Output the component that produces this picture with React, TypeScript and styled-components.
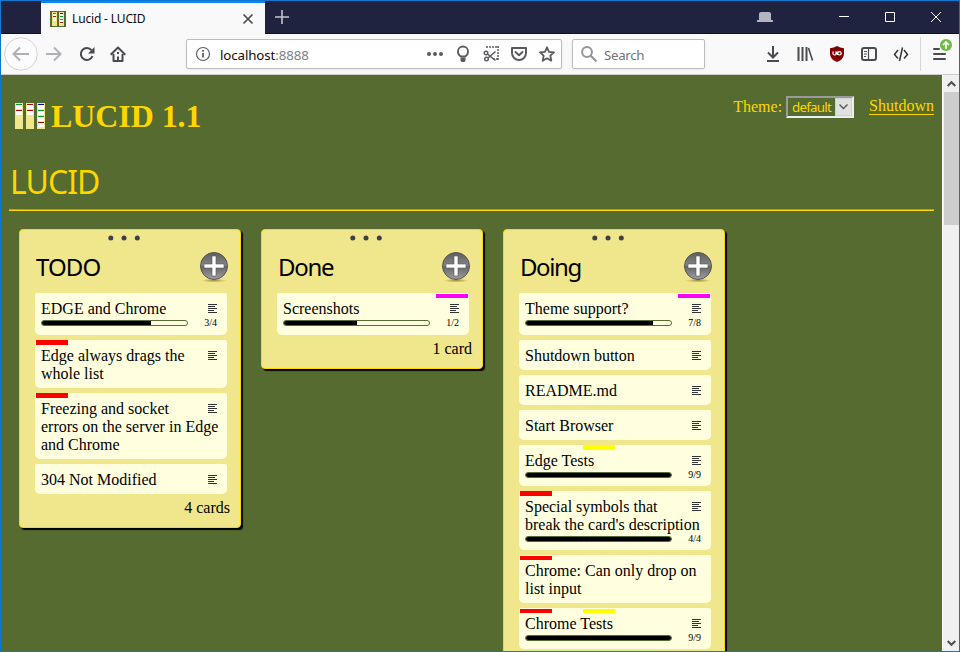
import React from 'react';
import styled, { createGlobalStyle } from 'styled-components';

const GlobalStyle = createGlobalStyle`
  * { box-sizing: border-box; }
  body { margin: 0; overflow: hidden; }
  svg { display: block; flex: none; overflow: visible; }
`;

const sans = `'Noto Sans', 'Open Sans', sans-serif`;
const serif = `'Liberation Serif', 'Times New Roman', serif`;

const Window = styled.div`
  width: 960px;
  height: 652px;
  display: flex;
  flex-direction: column;
  border: 1px solid #0a78d0;
  background: #f9f9fa;
  overflow: hidden;
`;

const TitleBar = styled.header`
  display: flex;
  height: 33px;
  flex: none;
  background: #202340;
  border-bottom: 1px solid #160d26;
`;

const Tab = styled.div`
  display: flex;
  align-items: center;
  width: 224px;
  height: 33px;
  margin-left: 40px;
  padding: 0 12px 0 9px;
  gap: 6px;
  background: #f9f9fa;
  border-top: 2px solid #0a84ff;
`;

const TabTitle = styled.span`
  flex: 1;
  font: 12px/16px ${sans};
  letter-spacing: -0.16px;
  color: #0c0c0d;
`;

const NewTab = styled.div`
  padding: 9px 0 0 10px;
  flex: 1;
`;

const WindowButton = styled.div<{ $w: number }>`
  width: ${p => p.$w}px;
  display: flex;
  align-items: center;
  justify-content: center;
`;

const HatButton = styled(WindowButton)`
  padding-right: 4px;
`;

const Toolbar = styled.nav`
  display: flex;
  align-items: center;
  height: 41px;
  flex: none;
  padding: 0 0 0 4px;
  border-bottom: 1px solid #ccc;
  background: #f9f9fa;
`;

const ToolButton = styled.div<{ $w?: number }>`
  width: ${p => p.$w ?? 32}px;
  height: 32px;
  flex: none;
  display: flex;
  align-items: center;
  justify-content: center;
`;

const Field = styled.div<{ $w: number }>`
  display: flex;
  align-items: center;
  width: ${p => p.$w}px;
  height: 30px;
  padding: 0 6px 0 8px;
  flex: none;
  gap: 12px;
  border: 1px solid #bdbdbf;
  border-radius: 2px;
  background: #fff;
  box-shadow: 0 1px 3px rgba(0, 0, 0, 0.06);
`;

const Address = styled.span`
  flex: 1;
  font: 13.3px/18px ${sans};
  letter-spacing: -0.1px;
  margin-left: -3px;
  padding-top: 2px;
  color: #0c0c0d;
  span { color: #808085; }
`;

const SearchHint = styled.span`
  font: 13.3px/18px ${sans};
  letter-spacing: -0.3px;
  margin-left: -5px;
  padding-top: 2px;
  color: #737378;
`;

const Separator = styled.div`
  width: 1px;
  height: 34px;
  margin: 0 3px;
  background: #d7d7db;
`;

const Viewport = styled.div`
  display: flex;
  flex: 1;
  min-height: 0;
`;

const Page = styled.main`
  width: 941px;
  flex: none;
  overflow: hidden;
  padding: 0 8px;
  background: #556b2f;
  color: #ffd700;
  font: 16px/18px ${serif};
`;

const Scrollbar = styled.div`
  width: 17px;
  flex: none;
  display: flex;
  flex-direction: column;
  align-items: center;
  background: #f0f0f0;
  border-left: 1px solid #fff;
`;

const ScrollArrow = styled.div`
  height: 17px;
  width: 100%;
  display: flex;
  align-items: center;
  justify-content: center;
`;

const Thumb = styled.div`
  width: 15px;
  height: 133px;
  background: #cdcdcd;
  margin-bottom: auto;
`;

const PageHead = styled.div`
  display: flex;
  height: 84px;
`;

const Brand = styled.h1`
  display: flex;
  flex: 1;
  gap: 6px;
  margin: 0;
  padding: 23px 0 0 6px;
  font: bold 32px/36px ${serif};
  letter-spacing: -0.08px;
  svg { margin-top: 5px; }
`;

const Controls = styled.div`
  display: flex;
  align-items: flex-start;
  padding-top: 21px;
`;

const Label = styled.span`
  padding-top: 2px;
  margin-right: 4px;
`;

const Select = styled.div`
  display: flex;
  width: 68px;
  height: 22px;
  margin-right: 15px;
  border: 2px solid;
  border-color: #9a9a9a #eee #eee #9a9a9a;
  font: 13.3px/18px ${sans};
  letter-spacing: -0.75px;
  span { flex: 1; padding-left: 4px; }
`;

const SelectArrow = styled.div`
  width: 17px;
  height: 18px;
  display: flex;
  align-items: center;
  justify-content: center;
  background: #e1e1e1;
  border: 1px solid #d0d0d0;
`;

const Shutdown = styled.a`
  margin-top: 1px;
  height: 18px;
  line-height: 18px;
  border-bottom: 1px solid #ffd700;
`;

const BoardTitle = styled.h2`
  margin: 0;
  height: 52px;
  padding: 5px 0 0 1px;
  border-bottom: 1px solid #ffd700;
  box-shadow: inset 0 -1px #b89f18;
  font: 32px/36px ${sans};
  letter-spacing: -0.95px;
`;

const Board = styled.div`
  display: flex;
  align-items: flex-start;
  gap: 20px;
  padding: 18px 10px;
`;

const List = styled.section`
  width: 222px;
  flex: none;
  padding: 0 13px 0 15px;
  border: 1px solid #ffd700;
  border-radius: 4px;
  background: #f0e68c;
  box-shadow: 2px 2px 1px #000;
  color: #000;
`;

const Grip = styled.div`
  display: flex;
  justify-content: center;
  height: 17px;
  padding: 5px 15px 0 0;
`;

const ListHead = styled.div`
  display: flex;
  justify-content: space-between;
  height: 46px;
  margin-right: -1px;
  padding: 5px 0 0 1px;
`;

const ListTitle = styled.h3<{ $ls: number }>`
  margin: 0;
  font: 24px/30px ${sans};
  letter-spacing: ${p => p.$ls}px;
`;

const CardBox = styled.article<{ $h: number }>`
  position: relative;
  width: 192px;
  height: ${p => p.$h}px;
  margin-bottom: 5px;
  padding: 7px 6px 0;
  border-radius: 2px 2px 5px 5px;
  background: #ffffe0;
`;

const NoteIcon = styled.div`
  float: right;
  width: 40px;
  height: 18px;
  margin-right: -9px;
  padding: 4px 0 0 18px;
`;

const Meter = styled.div`
  display: flex;
  align-items: center;
  justify-content: space-between;
  clear: both;
  height: 8px;
  margin-top: 1px;
  padding-right: 4px;
  font-size: 10px;
  line-height: 10px;
`;

const Track = styled.div`
  width: 147px;
  height: 6px;
  border: 1px solid #556b2f;
  border-radius: 3px;
  background: #ffffe0;
  overflow: hidden;
`;

const Fill = styled.div`
  height: 100%;
  background: #000;
`;

const Tag = styled.i<{ $x: number; $c: string; $thin?: boolean }>`
  position: absolute;
  left: ${p => p.$x}px;
  top: ${p => (p.$thin ? 1 : 0)}px;
  width: 32px;
  height: ${p => (p.$thin ? 4 : 5)}px;
  background: ${p => p.$c};
`;

const Footer = styled.div`
  height: 28px;
  text-align: right;
  margin-right: -3px;
`;

const Ico = ({ children, size = 16, c = '#4a4a4f' }: { children: React.ReactNode; size?: number; c?: string }) => (
  <svg width={size} height={size} viewBox={`0 0 ${size} ${size}`} fill="none" stroke={c} strokeWidth="2">{children}</svg>
);

const Favicon = () => (
  <svg width="16" height="16" shapeRendering="crispEdges">
    <rect width="16" height="16" fill="#556b2f" />
    <rect x="2" y="1" width="5" height="14" fill="#f0e68c" />
    <rect x="9" y="1" width="5" height="14" fill="#f0e68c" />
    <path d="M3 2h3v8H3zM10 2h3v11h-3z" fill="#fff" />
    <path d="M3 2h3v1H3zM10 5h3v1h-3zM10 8h3v1h-3z" fill="#00a020" />
    <path d="M3 5h3v1H3zM10 11h3v1h-3z" fill="#b01010" />
    <path d="M10 2h3v1h-3z" fill="#1010b0" />
  </svg>
);

const Logo = () => (
  <svg width="30" height="26" shapeRendering="crispEdges">
    {[0, 11, 22].map(x => <rect key={x} x={x} width="8" height="26" rx="1" fill="#f0e68c" />)}
    <path d="M1 1h6v11H1zM12 1h6v11h-6zM23 1h6v23h-6z" fill="#fff" />
    <path d="M1 6h6v1H1zM12 6h6v1h-6zM23 6h6v1h-6zM23 12h6v1h-6zM23 18h6v1h-6z" fill="#f0e68c" />
    <path d="M1 1h6v1H1zM23 7h6v1h-6zM23 13h6v1h-6z" fill="#00a020" />
    <path d="M12 1h6v1h-6zM1 7h6v1H1zM12 7h6v1h-6zM23 19h6v1h-6z" fill="#b00000" />
    <path d="M23 1h6v1h-6z" fill="#0000b0" />
  </svg>
);

const PlusBadge = () => (
  <svg width="28" height="31" viewBox="0 0 28 31">
    <defs>
      <linearGradient id="disc" x1="0" y1="0" x2="0" y2="1">
        <stop offset="0" stopColor="#5f5f5f" />
        <stop offset=".48" stopColor="#858585" />
        <stop offset=".52" stopColor="#666" />
        <stop offset="1" stopColor="#a0a0a0" />
      </linearGradient>
      <radialGradient id="shade">
        <stop offset="0" stopColor="#8c7b28" stopOpacity=".8" />
        <stop offset="1" stopColor="#8c7b28" stopOpacity="0" />
      </radialGradient>
    </defs>
    <ellipse cx="14" cy="28.6" rx="13" ry="1.8" fill="url(#shade)" />
    <circle cx="14" cy="14" r="13.5" fill="url(#disc)" stroke="#555" strokeWidth="1" />
    <path d="M12 4h4v8h8v4h-8v8h-4v-8H4v-4h8z" fill="#fff" stroke="#555" strokeWidth=".6" />
  </svg>
);

type CardData = { text: string; h: number; done?: number; total?: number; plain?: boolean; tags?: [number, string, boolean?][] };
type ListData = { title: string; ls: number; cards: CardData[]; count?: string };

const lists: ListData[] = [
  { title: 'TODO', ls: -0.9, count: '4 cards', cards: [
    { text: 'EDGE and Chrome', h: 42, done: 3, total: 4 },
    { text: 'Edge always drags the whole list', h: 48, tags: [[1, '#f00']] },
    { text: 'Freezing and socket errors on the server in Edge and Chrome', h: 66, tags: [[1, '#f00']] },
    { text: '304 Not Modified', h: 30 },
  ] },
  { title: 'Done', ls: -1.3, count: '1 card', cards: [
    { text: 'Screenshots', h: 42, done: 1, total: 2, tags: [[159, '#f0f', true]] },
  ] },
  { title: 'Doing', ls: -1.4, cards: [
    { text: 'Theme support?', h: 42, done: 7, total: 8, tags: [[159, '#f0f', true]] },
    { text: 'Shutdown button', h: 30 },
    { text: 'README.md', h: 30 },
    { text: 'Start Browser', h: 30 },
    { text: 'Edge Tests', h: 41, done: 9, total: 9, tags: [[64, '#ff0']] },
    { text: "Special symbols that break the card's description", h: 59, done: 4, total: 4, tags: [[1, '#f00']] },
    { text: 'Chrome: Can only drop on list input', h: 48, plain: true, tags: [[1, '#f00', true]] },
    { text: 'Chrome Tests', h: 41, done: 9, total: 9, tags: [[1, '#f00', true], [64, '#ff0', true]] },
  ] },
];

const Card = ({ card }: { card: CardData }) => (
  <CardBox $h={card.h}>
    {card.tags?.map(([x, c, thin]) => <Tag key={x} $x={x} $c={c} $thin={thin} />)}
    {!card.plain && (
      <NoteIcon>
        <svg width="9" height="10" shapeRendering="crispEdges"><path d="M0 .5h9M0 2.5h7M0 4.5h9M0 6.5h6M0 8.5h9" stroke="#333" /></svg>
      </NoteIcon>
    )}
    {card.text}
    {card.total && (
      <Meter>
        <Track><Fill style={{ width: `${(card.done! / card.total) * 100}%` }} /></Track>
        {card.done}/{card.total}
      </Meter>
    )}
  </CardBox>
);

export default function App() {
  return (
    <Window>
      <GlobalStyle />
      <TitleBar>
        <Tab>
          <Favicon />
          <TabTitle>Lucid - LUCID</TabTitle>
          <Ico size={10}><path d="M.5.5l9 9M9.5.5l-9 9" strokeWidth="1.7" /></Ico>
        </Tab>
        <NewTab><Ico size={14} c="#c4c4cc"><path d="M7 0v14M0 7h14" strokeWidth="1.6" /></Ico></NewTab>
        <HatButton $w={108}>
          <svg width="16" height="10"><path d="M2 8V1.500Q2.200 0 4 0h8q1.800 0 2 1.500V8H16v2H0V8z" fill="#b4b4c0" /></svg>
        </HatButton>
        <WindowButton $w={46}><Ico size={10} c="#fff"><path d="M0 4.500h10" strokeWidth="1" /></Ico></WindowButton>
        <WindowButton $w={46}><Ico size={10} c="#fff"><path d="M.5.5h9v9h-9z" strokeWidth="1" /></Ico></WindowButton>
        <WindowButton $w={46}><Ico size={10} c="#fff"><path d="M0 0l10 10M10 0L0 10" strokeWidth="1" /></Ico></WindowButton>
      </TitleBar>
      <Toolbar>
        <ToolButton>
          <Ico size={34} c="#b1b1b5"><circle cx="17" cy="17" r="16.300" stroke="#d4d4d8" strokeWidth="1" fill="#fcfcfc" /><path d="M25 17H10M16 10.500L9.500 17l6.500 6.500" /></Ico>
        </ToolButton>
        <ToolButton $w={34}><Ico c="#b1b1b5"><path d="M0 8h14M8 1.500L14.500 8 8 14.500" /></Ico></ToolButton>
        <ToolButton $w={31}><Ico><path d="M13.500 10A6 6 0 1 1 12.500 4.200" /><path d="M15.500 1v6.500H9z" fill="#4a4a4f" stroke="none" /></Ico></ToolButton>
        <ToolButton><Ico><path d="M.7 8.700L8 1.500l7.300 7.200M3.500 8v7h9V8" strokeLinejoin="round" /><path d="M7 10.500h2V15H7zM7 6h2v2H7z" fill="#4a4a4f" stroke="none" /></Ico></ToolButton>
        <ToolButton $w={52} />
        <Field $w={376}>
          <Ico c="#5e5e63"><circle cx="8" cy="8" r="6.500" strokeWidth="1.200" /><path d="M8 7v4.500M8 4v1.700" strokeWidth="1.800" /></Ico>
          <Address>localhost<span>:8888</span></Address>
          <Ico><g fill="#5a5a5f" stroke="none"><circle cx="2" cy="8" r="2" /><circle cx="8" cy="8" r="2" /><circle cx="14" cy="8" r="2" /></g></Ico>
          <Ico c="#5a5a5f"><path d="M5.800 10.500Q2.800 8.500 3 5.500A5 5 0 0 1 13 5.500Q13.200 8.500 10.200 10.500z" strokeWidth="1.800" /><path d="M5.500 11.500h5v3l-1 1.500h-3l-1-1.500z" fill="#5a5a5f" stroke="none" /></Ico>
          <Ico c="#5a5a5f"><path d="M3 1h13M15 0v14M10 13h6" strokeWidth="1.500" strokeDasharray="2 1" /><circle cx="3" cy="7" r="1.800" strokeWidth="1.400" /><circle cx="3.500" cy="13" r="1.800" strokeWidth="1.400" /><path d="M4.500 8l8 6.500M5 12l7.500-6.500" strokeWidth="1.600" /></Ico>
          <Ico c="#5a5a5f"><path d="M1 2h14v5a7 7 0 0 1-14 0zM4.500 6L8 9.300 11.500 6" strokeWidth="2" strokeLinejoin="round" strokeLinecap="round" /></Ico>
          <Ico c="#5a5a5f"><path d="M8 1.300l2 4.500 5 .5-3.700 3.400 1 5L8 12.300l-4.300 2.400 1-5L1 6.300l5-.5z" strokeLinejoin="round" strokeWidth="1.800" /></Ico>
        </Field>
        <ToolButton $w={10} />
        <Field $w={133}>
          <Ico c="#949499"><circle cx="6" cy="6" r="4.900" /><path d="M9.500 9.500L15.500 15.500" strokeWidth="2.300" /></Ico>
          <SearchHint>Search</SearchHint>
        </Field>
        <ToolButton $w={52} />
        <ToolButton><Ico><path d="M8 0v11M3 6.500l5 5 5-5M2 15h12" /></Ico></ToolButton>
        <ToolButton><Ico><path d="M1.500 1v14M5.500 1v14M9.500 1v14" /><path d="M11.500 2L15.500 14.500" strokeWidth="1.600" /></Ico></ToolButton>
        <ToolButton>
          <svg width="16" height="16" viewBox="0 0 16 16"><path d="M8 0q3 2 7 2.200V8q0 5-7 8Q1 13 1 8V2.200Q5 2 8 0z" fill="#800000" /><path d="M4 5.500v2a1.500 1.500 0 0 0 3 0v-2M8.200 9V5.500" fill="none" stroke="#fff" strokeWidth="1.200" /><circle cx="10.500" cy="7.300" r="1.700" fill="none" stroke="#fff" strokeWidth="1.200" /></svg>
        </ToolButton>
        <ToolButton><Ico><rect x="1" y="2" width="14" height="12" rx="2" /><path d="M7.500 2v12M3 5.500h3M3 8h3M3 10.500h2" strokeWidth="1.200" /></Ico></ToolButton>
        <ToolButton><Ico c="#333"><path d="M5 4L1.500 8.500 5 12.500M11 4l3.500 4.500L11 12.500M9.500 1.500l-3 13.500" strokeWidth="1.500" /></Ico></ToolButton>
        <Separator />
        <ToolButton $w={34}>
          <Ico><path d="M1 3h5M1 8h11M1 13h11" strokeLinecap="round" /><circle cx="13" cy="-1" r="6" fill="#6abf40" stroke="none" /><path d="M13 3V-3.500M10 -1l3-3 3 3" stroke="#fff" strokeWidth="1.700" /></Ico>
        </ToolButton>
      </Toolbar>
      <Viewport>
        <Page>
          <PageHead>
            <Brand><Logo />LUCID 1.1</Brand>
            <Controls>
              <Label>Theme:</Label>
              <Select>
                <span>default</span>
                <SelectArrow><svg width="9" height="6"><path d="M.5.5l4 4 4-4" fill="none" stroke="#555" strokeWidth="1.400" /></svg></SelectArrow>
              </Select>
              <Shutdown>Shutdown</Shutdown>
            </Controls>
          </PageHead>
          <BoardTitle>LUCID</BoardTitle>
          <Board>
            {lists.map(list => (
              <List key={list.title}>
                <Grip>
                  <svg width="32" height="6"><g fill="#3f3f46"><circle cx="2.800" cy="3" r="2.500" /><circle cx="16" cy="3" r="2.500" /><circle cx="29.300" cy="3" r="2.500" /></g></svg>
                </Grip>
                <ListHead>
                  <ListTitle $ls={list.ls}>{list.title}</ListTitle>
                  <PlusBadge />
                </ListHead>
                {list.cards.map(card => <Card key={card.text} card={card} />)}
                <Footer>{list.count}</Footer>
              </List>
            ))}
          </Board>
        </Page>
        <Scrollbar>
          <ScrollArrow><svg width="9" height="6"><path d="M.7 5l3.800-3.800L8.300 5" fill="none" stroke="#505050" strokeWidth="2" /></svg></ScrollArrow>
          <Thumb />
          <ScrollArrow><svg width="9" height="6"><path d="M.7 1l3.800 3.800L8.300 1" fill="none" stroke="#505050" strokeWidth="2" /></svg></ScrollArrow>
        </Scrollbar>
      </Viewport>
    </Window>
  );
}
